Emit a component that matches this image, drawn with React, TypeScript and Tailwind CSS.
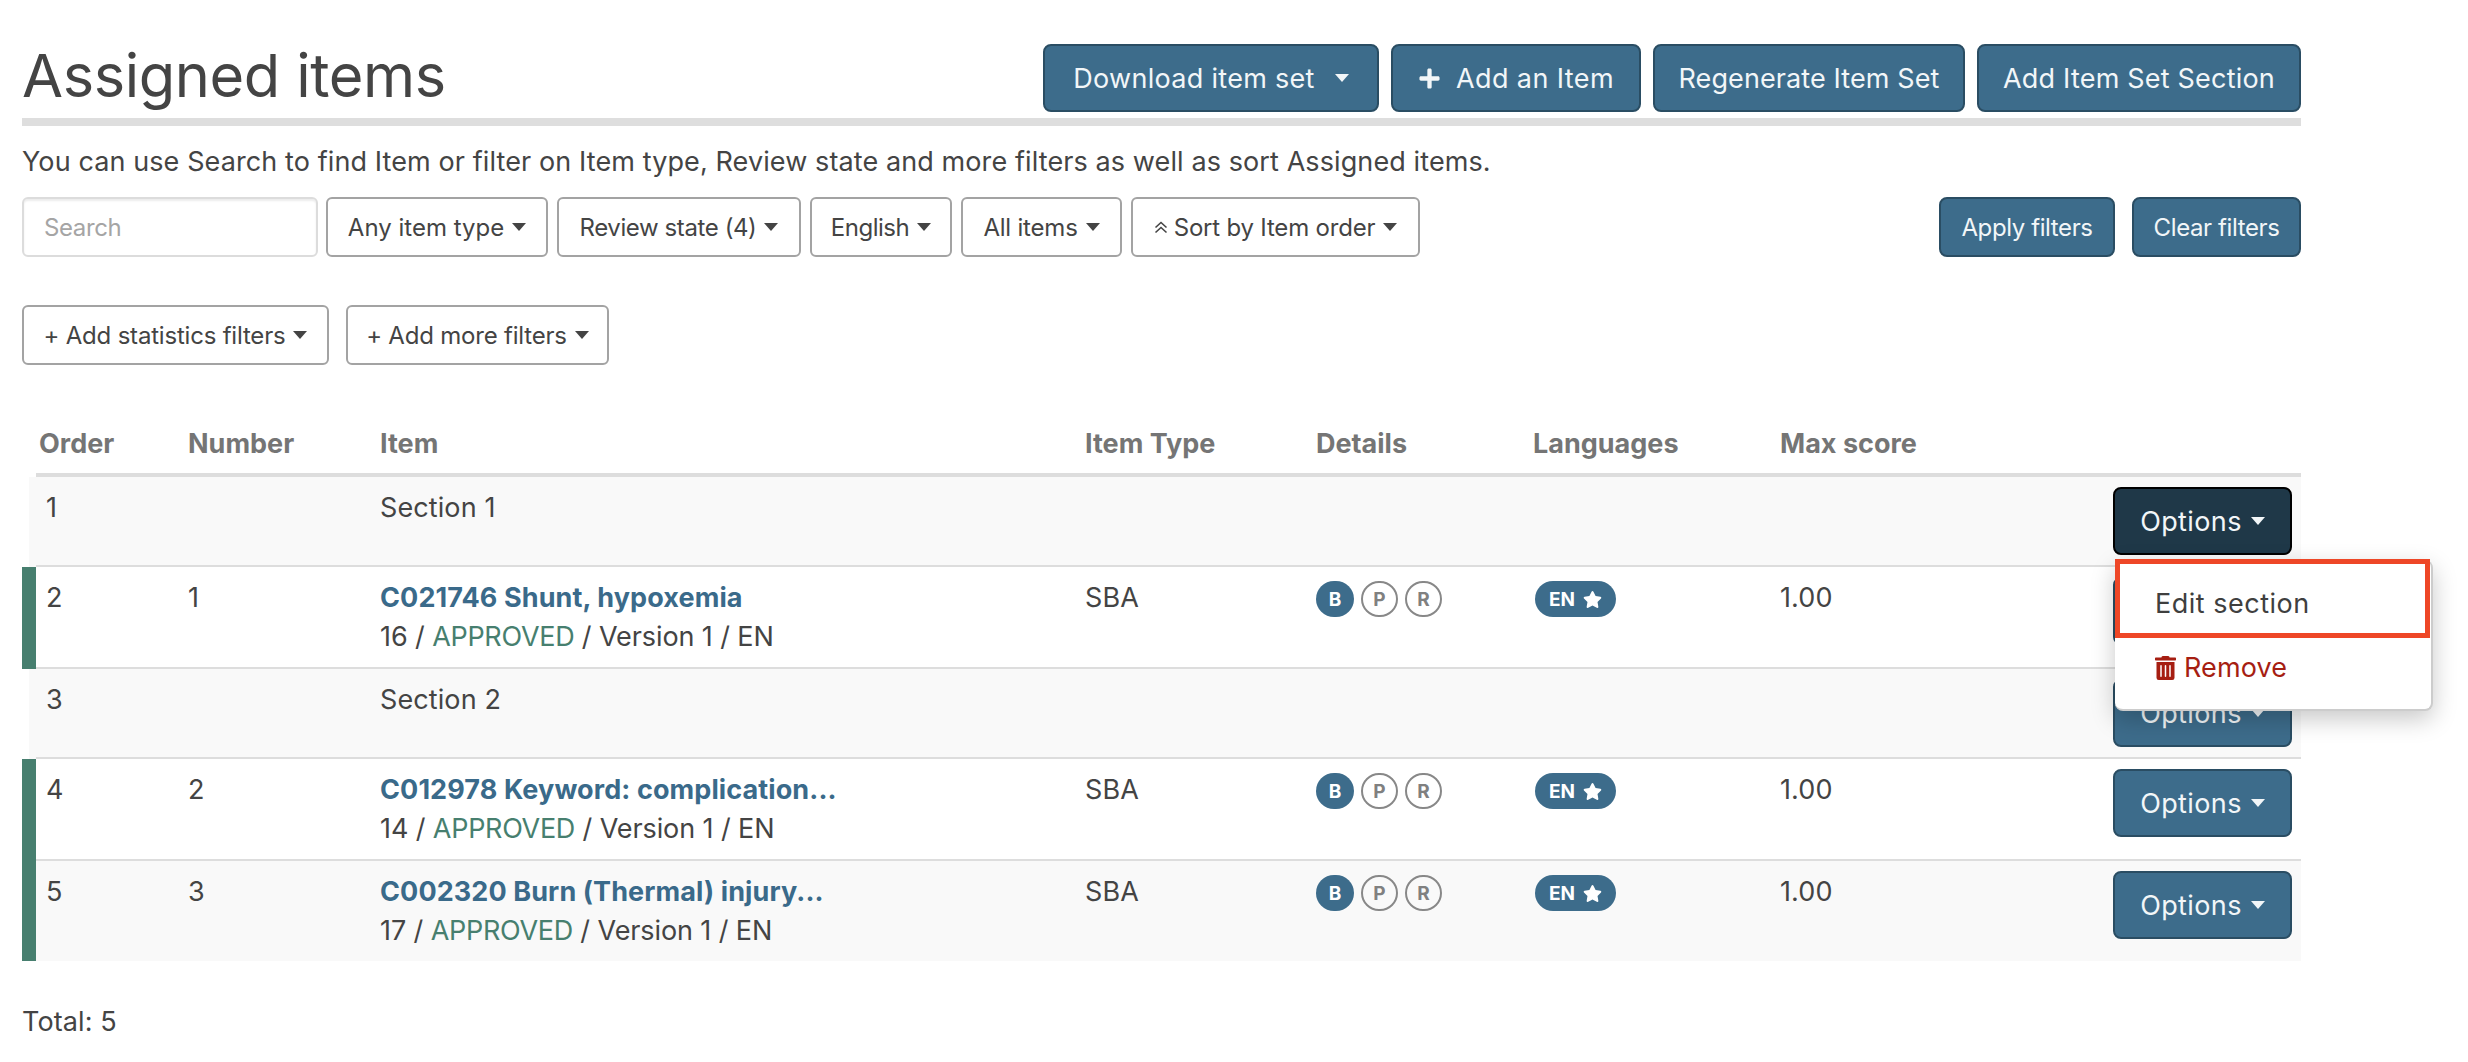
import { FaPlus, FaStar, FaTrashAlt } from "react-icons/fa";

const cols = "grid grid-cols-[142px_192px_705px_231px_217px_247px_1fr]";

const Caret = ({ className = "" }: { className?: string }) => (
  <span className={`inline-block w-0 h-0 border-x-[7.5px] border-x-transparent border-t-[8px] border-t-current ${className}`} />
);

const PrimaryButton = ({ className = "", children }: { className?: string; children: React.ReactNode }) => (
  <button className={`flex items-center justify-center rounded-lg border-2 border-[#2a4d63] bg-[#3d6c8b] text-[#f2f6f8] ${className}`}>
    {children}
  </button>
);

const FilterButton = ({ className = "", children }: { className?: string; children: React.ReactNode }) => (
  <button className={`flex items-center justify-center gap-2 rounded-md border-2 border-[#a3a3a3] bg-white text-[24px] text-[#444] tracking-[-0.2px] ${className}`}>
    {children}
  </button>
);

const Badges = () => (
  <div className="mt-[4px] flex gap-[7px] text-[19px] font-bold tracking-normal">
    <span className="flex h-[36px] w-[38px] items-center justify-center rounded-full bg-[#3d6c8b] text-white">B</span>
    <span className="flex h-[36px] w-[37px] items-center justify-center rounded-full border-2 border-[#888] text-[#808080]">P</span>
    <span className="flex h-[36px] w-[37px] items-center justify-center rounded-full border-2 border-[#888] text-[#808080]">R</span>
  </div>
);

const LangPill = () => (
  <div className="mt-[4px] ml-[2px] flex h-[36px] w-[81px] items-center justify-center gap-[8px] rounded-full bg-[#3d6c8b] text-[19px] font-bold tracking-normal text-white">
    EN <FaStar className="h-[19px] w-[19px]" />
  </div>
);

const OptionsButton = ({ active = false }: { active?: boolean }) => (
  <button
    className={`flex h-[68px] w-[179px] items-center justify-center gap-[9px] rounded-lg border-2 tracking-[0.4px] text-[#f2f6f8] ${
      active ? "border-black bg-[#1f3848]" : "border-[#2a4d63] bg-[#3d6c8b]"
    }`}
  >
    Options <Caret />
  </button>
);

const SectionRow = ({ order, title, active = false, menu = false }: { order: number; title: string; active?: boolean; menu?: boolean }) => (
  <div className="flex">
    <div className="ml-[7px] w-[7px] bg-[#f9f9f9]" />
    <div className={`${cols} flex-1 border-b-2 border-[#dddddd] bg-[#f9f9f9] pl-[10px]`}>
      <div className="pt-[11px]">{order}</div>
      <div />
      <div className="pt-[11px]">{title}</div>
      <div />
      <div />
      <div />
      <div className="flex justify-end py-[10px] pr-[9px]">
        <div className="relative">
          <OptionsButton active={active} />
          {menu && (
            <div className="absolute left-[2px] top-[73px] z-10 h-[151px] w-[318px] rounded-lg border-b-2 border-r-2 border-[#cccccc] bg-white shadow-[0_8px_24px_rgba(0,0,0,0.22)]">
              <div className="-mt-[1px] flex h-[79px] w-[315px] items-center border-[5px] border-[#ee4727] pl-[35px] pt-[10px] tracking-[0.5px] text-[#3f3f3f]">
                Edit section
              </div>
              <div className="mt-[10px] flex items-center gap-[8px] pl-[40px] text-[#a61e12]">
                <FaTrashAlt className="h-[24px] w-[21px]" /> Remove
              </div>
            </div>
          )}
        </div>
      </div>
    </div>
  </div>
);

const ItemRow = ({
  order,
  number,
  title,
  count,
  shaded = false,
  last = false,
}: {
  order: number;
  number: number;
  title: string;
  count: number;
  shaded?: boolean;
  last?: boolean;
}) => (
  <div className="flex">
    <div className="w-[14px] bg-[#477f6f]" />
    <div className={`${cols} flex-1 pl-[10px] ${shaded ? "bg-[#f9f9f9]" : "bg-white"} ${last ? "" : "border-b-2 border-[#dddddd]"}`}>
      <div className="pt-[11px]">{order}</div>
      <div className="pt-[11px]">{number}</div>
      <div className="pt-[11px] pb-[11px]">
        <div className="font-bold text-[#3a6a8a]">{title}</div>
        <div className="tracking-[-0.1px]">
          {count} / <span className="tracking-[-0.3px] text-[#477f6f]">APPROVED</span> / Version 1 / EN
        </div>
      </div>
      <div className="pt-[11px]">SBA</div>
      <div className="pt-[10px]">
        <Badges />
      </div>
      <div className="pt-[10px]">
        <LangPill />
      </div>
      <div className="flex items-start justify-between pt-[10px] pr-[9px]">
        <span className="mt-[1px]">1.00</span>
        <OptionsButton />
      </div>
    </div>
  </div>
);

export default function App() {
  return (
    <div className="min-h-[1062px] bg-white font-['Inter',sans-serif] text-[27px] leading-[39px] tracking-[0.1px] text-[#444]">
      <div className="ml-[22px] w-[2279px] pt-[44px]">
        <div className="flex h-[68px] items-center justify-between">
          <h1 className="pb-[5px] text-[59.5px] font-normal tracking-[-0.4px] text-[#444]">Assigned items</h1>
          <div className="flex gap-[12px]">
            <PrimaryButton className="h-[68px] w-[336px] gap-[20px] tracking-[0.3px]">
              Download item set <Caret />
            </PrimaryButton>
            <PrimaryButton className="h-[68px] w-[250px] gap-[15px] tracking-[0.4px]">
              <FaPlus className="h-[23px] w-[23px]" /> Add an Item
            </PrimaryButton>
            <PrimaryButton className="h-[68px] w-[312px]">Regenerate Item Set</PrimaryButton>
            <PrimaryButton className="h-[68px] w-[324px] tracking-[0.2px]">Add Item Set Section</PrimaryButton>
          </div>
        </div>
        <div className="mt-[6px] h-[8px] bg-[#dedede]" />
        <p className="flex h-[71px] items-center">
          You can use Search to find Item or filter on Item type, Review state and more filters as well as sort Assigned items.
        </p>

        <div className="flex h-[60px] gap-[9px]">
          <input
            placeholder="Search"
            className="-mr-[1px] h-[60px] w-[296px] rounded-md border-2 border-[#dcdcdc] bg-white pl-[20px] text-[24px] tracking-[-0.4px] placeholder:text-[#a5a5a5] shadow-[inset_0_2px_2px_rgba(0,0,0,0.08)]"
          />
          <FilterButton className="w-[222px]">
            <span className="tracking-[0px]">Any item type</span> <Caret />
          </FilterButton>
          <FilterButton className="w-[244px]">
            <span className="tracking-[-0.4px]">Review state (4)</span> <Caret />
          </FilterButton>
          <FilterButton className="w-[142px]">
            <span className="tracking-[-0.5px]">English</span> <Caret />
          </FilterButton>
          <FilterButton className="w-[161px]">
            All items <Caret />
          </FilterButton>
          <FilterButton className="w-[289px]">
            <span className="flex items-center gap-[6px]">
              <svg viewBox="0 0 14 13" className="h-[13px] w-[14px]" fill="none" stroke="currentColor" strokeWidth="1.6">
                <path d="M1.5 6.5 7 1.5 12.5 6.5" />
                <path d="M1.5 11.5 7 6.5 12.5 11.5" />
              </svg>
              Sort by Item order
            </span>
            <Caret />
          </FilterButton>
          <div className="ml-auto flex gap-[17px] text-[24px] tracking-[-0.4px]">
            <PrimaryButton className="h-[60px] w-[176px]">Apply filters</PrimaryButton>
            <PrimaryButton className="h-[60px] w-[169px]">Clear filters</PrimaryButton>
          </div>
        </div>

        <div className="mt-[48px] flex h-[60px] gap-[17px]">
          <FilterButton className="w-[307px]">
            + Add statistics filters <Caret />
          </FilterButton>
          <FilterButton className="w-[263px]">
            + Add more filters <Caret />
          </FilterButton>
        </div>

        <div className="mt-[48px] ml-[14px] grid grid-cols-[149px_192px_705px_231px_217px_247px_1fr] border-b-4 border-[#dddddd] pb-[10px] pl-[3px] pt-[11px] font-bold tracking-normal text-[#757575]">
          <div>Order</div>
          <div>Number</div>
          <div>Item</div>
          <div>Item Type</div>
          <div>Details</div>
          <div>Languages</div>
          <div>Max score</div>
        </div>

        <SectionRow order={1} title="Section 1" active menu />
        <ItemRow order={2} number={1} title="C021746 Shunt, hypoxemia" count={16} />
        <SectionRow order={3} title="Section 2" />
        <ItemRow order={4} number={2} title="C012978 Keyword: complication..." count={14} />
        <ItemRow order={5} number={3} title="C002320 Burn (Thermal) injury..." count={17} shaded last />

        <div className="mt-[41px]">Total: 5</div>
      </div>
    </div>
  );
}
